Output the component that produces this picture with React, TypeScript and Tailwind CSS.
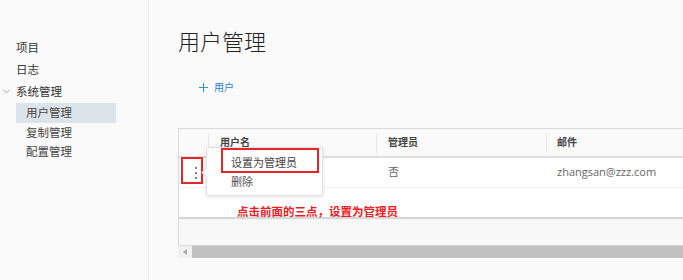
import React from "react";

const FONT = { fontFamily: '"Open Sans", "Noto Sans CJK SC", sans-serif' };

const NAV = [
  { label: "项目", level: 0 },
  { label: "日志", level: 0 },
  { label: "系统管理", level: 0, open: true },
  { label: "用户管理", level: 1, active: true },
  { label: "复制管理", level: 1 },
  { label: "配置管理", level: 1 },
];

function Sidebar() {
  return (
    <aside className="w-[149px] shrink-0 border-r border-[#e6e6e6] bg-[#fafafa] pt-[37px]">
      {NAV.map((item) =>
        item.level === 0 ? (
          <div
            key={item.label}
            className="relative flex h-[22px] items-center pl-[16px] text-[11.5px] text-[#333]"
          >
            {item.open && (
              <svg
                className="absolute left-[3px] top-[8px]"
                width="7"
                height="5"
                viewBox="0 0 7 5"
                fill="none"
                stroke="#999"
                strokeWidth="0.9"
              >
                <path d="M0.5 0.8 L3.5 3.8 L6.5 0.8" />
              </svg>
            )}
            {item.label}
          </div>
        ) : (
          <div
            key={item.label}
            className={`ml-[16px] mr-[32px] flex h-[19.5px] items-center pl-[10px] text-[11.5px] text-[#444] ${
              item.active ? "bg-[#dce4eb] text-[#222]" : ""
            }`}
          >
            {item.label}
          </div>
        )
      )}
    </aside>
  );
}

function Dots() {
  return (
    <div className="flex flex-col items-center gap-[3px]">
      <span className="h-[2px] w-[2px] rounded-full bg-[#555]" />
      <span className="h-[2px] w-[2px] rounded-full bg-[#555]" />
      <span className="h-[2px] w-[2px] rounded-full bg-[#555]" />
    </div>
  );
}

function UserTable() {
  return (
    <div className="relative mt-[33px] w-[540px]">
      <div className="border-l border-t border-[#d9d9d9] bg-white">
        {/* header */}
        <div className="flex h-[29px] items-center border-b-2 border-[#dedede] bg-[#fafafa] text-[10px] font-semibold text-[#444]">
          <div className="h-[20px] w-[30px] border-r border-[#e6e6e6]" />
          <div className="flex h-[20px] w-[168px] items-center border-r border-[#e6e6e6] pl-[11px]">用户名</div>
          <div className="flex h-[20px] w-[170px] items-center border-r border-[#e6e6e6] pl-[11px]">管理员</div>
          <div className="flex h-[20px] flex-1 items-center pl-[10px]">邮件</div>
        </div>
        {/* row */}
        <div className="flex h-[30px] items-center border-b border-[#eeeeee] text-[11px] text-[#666]">
          <div className="flex w-[30px] justify-center pl-[3px]">
            <Dots />
          </div>
          <div className="w-[168px] pl-[11px]" />
          <div className="w-[170px] pl-[11px]">否</div>
          <div className="flex-1 pl-[10px]">zhangsan@zzz.com</div>
        </div>
        <div className="h-[29px]" />
      </div>
      <div className="h-[29px] border-b border-l border-t-2 border-[#d9d9d9] border-t-[#d6d6d6] bg-[#f8f8f8]" />
      {/* scrollbar */}
      <div className="flex h-[12px] bg-[#f1f1f1]">
        <div className="flex w-[14px] items-center justify-center">
          <span className="h-0 w-0 border-y-[3px] border-r-[4px] border-y-transparent border-r-[#a8a8a8]" />
        </div>
        <div className="flex-1 bg-[#c1c1c1]" />
      </div>

      {/* annotation: red box round the dots */}
      <div className="absolute left-[3px] top-[29px] h-[27px] w-[22px] border-2 border-[#e5262a]" />

      {/* dropdown menu */}
      <div className="absolute left-[28px] top-[19px] h-[49px] w-[117px] rounded-[2px] border border-[#e2e2e2] bg-white text-[11px] text-[#444] shadow-[0_1px_4px_rgba(0,0,0,0.12)]">
        <span className="absolute left-[-4px] top-[21px] h-[7px] w-[7px] rotate-45 border-b border-l border-[#e2e2e2] bg-white" />
        <div className="pl-[24px] pt-[6px] leading-[17px]">设置为管理员</div>
        <div className="pl-[24px] pt-[2px] leading-[17px] text-[#555]">删除</div>
      </div>
      <div className="absolute left-[43px] top-[20px] h-[25px] w-[98px] border-2 border-[#e5262a]" />

      <div className="absolute left-[59px] top-[75px] text-[11.5px] font-bold text-[#ee1c25]">
        点击前面的三点，设置为管理员
      </div>
    </div>
  );
}

export default function App() {
  return (
    <div className="flex h-[280px] w-[683px] overflow-hidden bg-[#fafafa]" style={FONT}>
      <Sidebar />
      <main className="flex-1 overflow-hidden pl-[29px]">
        <h1 className="mt-[26px] text-[22px] font-light leading-[30px] text-[#222]">用户管理</h1>
        <button className="ml-[21px] mt-[24px] flex items-center gap-[6px] text-[10px] text-[#2a7fd0]">
          <svg width="9" height="9" viewBox="0 0 9 9" stroke="#3b8bd6" strokeWidth="1.1">
            <path d="M4.5 0 V9 M0 4.5 H9" />
          </svg>
          用户
        </button>
        <UserTable />
      </main>
    </div>
  );
}
